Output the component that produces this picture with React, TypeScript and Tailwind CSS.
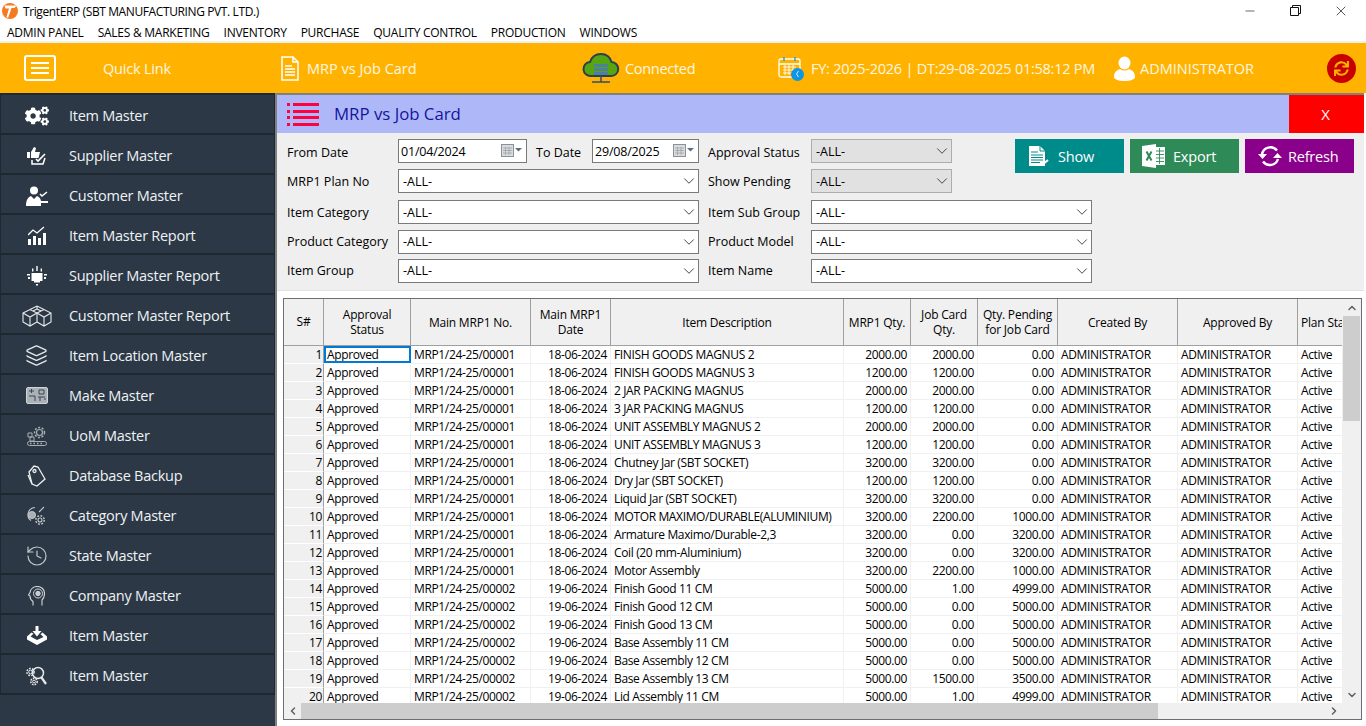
import { ChevronDown, ChevronLeft, ChevronRight, ChevronUp, History, Layers, Minus, X } from "lucide-react"
import { FaCogs, FaSync } from "react-icons/fa"
import type { ReactNode } from "react"

const FONT = "[font-family:'Open_Sans','Noto_Sans',sans-serif]"

const menus = ["ADMIN PANEL", "SALES & MARKETING", "INVENTORY", "PURCHASE", "QUALITY CONTROL", "PRODUCTION", "WINDOWS"]

function SupplierIcon() {
  return (
    <svg width="22" height="20" viewBox="0 0 22 20" fill="none">
      <path d="M1 6h3v6H1zM5 6l3-5 2 1-1 4h5l-1.5 6H5z" fill="#fff" />
      <path d="M6 14v4h11l2-6" stroke="#fff" strokeWidth="1.5" />
      <path d="M10 13l2 2 7-7" stroke="#fff" strokeWidth="1.6" />
    </svg>
  )
}

function CustomerIcon() {
  return (
    <svg width="24" height="20" viewBox="0 0 24 20" fill="none">
      <circle cx="9" cy="4.5" r="4" fill="#fff" />
      <path d="M1 20c0-6 2-9 5-10l3 3 3-3c2 .7 3.5 2 4 5h7v2h-7v3z" fill="#fff" />
      <path d="M15 8l2 2 5-4" stroke="#fff" strokeWidth="1.6" />
    </svg>
  )
}

function ChartIcon() {
  return (
    <svg width="18" height="20" viewBox="0 0 18 20" fill="#fff">
      <rect x="0" y="13" width="3" height="6" />
      <rect x="5" y="10" width="3" height="9" />
      <rect x="10" y="12" width="3" height="7" />
      <rect x="15" y="7" width="3" height="12" />
      <path d="M0 9l5-5 4 3 7-6" stroke="#fff" strokeWidth="1.3" fill="none" />
    </svg>
  )
}

function CrownIcon() {
  return (
    <svg width="20" height="20" viewBox="0 0 20 20" fill="#fff">
      <rect x="4.500" y="7" width="11" height="8" />
      <rect x="7" y="15" width="6" height="1.500" />
      <rect x="9" y="18" width="2" height="1.500" />
      <rect x="9.300" y="0" width="1.400" height="5" />
      <rect x="5" y="2.500" width="1.400" height="3" />
      <rect x="13.600" y="2.500" width="1.400" height="3" />
      <rect x="0" y="8" width="3" height="1.500" />
      <rect x="1" y="11" width="2" height="2" />
      <rect x="17" y="8" width="3" height="1.500" />
      <rect x="17" y="11" width="2" height="2" />
    </svg>
  )
}

function CubesIcon() {
  return (
    <svg width="30" height="22" viewBox="0 0 30 22" fill="none" stroke="#e8ebed" strokeWidth="1.100">
      <path d="M1 8l7-3.500L15 8v9l-7 4-7-4zM1 8l7 4 7-4M8 12v9" />
      <path d="M15 8l7-3.500L29 8v9l-7 4-7-4M15 8l7 4 7-4M22 12v9" />
      <path d="M8 4.500L15 1l7 3.500M15 1v3l-4 2M15 4l4 2" />
    </svg>
  )
}

function MakeIcon() {
  return (
    <svg width="22" height="17" viewBox="0 0 22 17">
      <rect x="0.500" y="0.500" width="21" height="16" rx="1.500" fill="#aab1b7" stroke="#cfd3d6" />
      <path d="M3 4h5M5.500 2v4M3 9h6v5M13 3h5v4h-5zM12 10h7M14 10v4M18 12h2" stroke="#3a4653" strokeWidth="1" fill="none" />
    </svg>
  )
}

function UomIcon() {
  return (
    <svg width="20" height="20" viewBox="0 0 20 20" fill="none" stroke="#a8afb5">
      <circle cx="12.500" cy="6.500" r="3" strokeWidth="1.200" />
      <circle cx="12.500" cy="6.500" r="5" strokeWidth="1.500" strokeDasharray="2 1.600" />
      <path d="M1 7h4v4H1zM3 11h4v4H3z" strokeWidth="1" />
      <rect x="0.500" y="15.500" width="19" height="4" rx="2" strokeWidth="1" />
      <path d="M3 17.500h14" strokeWidth="1.500" strokeDasharray="1.500 2" />
    </svg>
  )
}

function TagIcon() {
  return (
    <svg width="19" height="22" viewBox="0 0 19 22" fill="none" stroke="#eef0f2" strokeWidth="1.300">
      <path d="M2 7l5-6 4 1 7 12-8 7-5-2z" />
      <circle cx="7.500" cy="6" r="1.500" />
      <path d="M1 10l4 9" />
    </svg>
  )
}

function CategoryIcon() {
  return (
    <svg width="19" height="20" viewBox="0 0 19 20" fill="none" stroke="#c2c7cc">
      <path d="M8 1.500A7 7 0 0 0 1 8a7 7 0 0 0 3 6.500" strokeWidth="1.200" />
      <circle cx="5" cy="9" r="3.500" fill="#a8afb5" />
      <circle cx="13" cy="14" r="2" strokeWidth="1.100" />
      <circle cx="13" cy="14" r="4.200" strokeWidth="1.500" strokeDasharray="1.800 1.500" />
      <path d="M12 6l5-5" strokeWidth="1.100" />
    </svg>
  )
}

function HeadIcon() {
  return (
    <svg width="17" height="20" viewBox="0 0 17 20" fill="none" stroke="#d3d7da">
      <path d="M5 19.500v-4C2.500 14 2 12 2 10L.5 9 2 6.500C2.500 3 5.500.5 9.500.5c4 0 7 3 7 7 0 3-1 5-2.500 6.500v5.500" strokeWidth="1.100" />
      <circle cx="10" cy="7.500" r="4.500" strokeWidth="1" />
      <circle cx="10" cy="7.500" r="2.200" fill="#c7ccd0" />
    </svg>
  )
}

function TrayIcon() {
  return (
    <svg width="20" height="19" viewBox="0 0 20 19" fill="#fff">
      <path d="M8.500 0h3v5h3L10 10.500 5.500 5h3z" />
      <path d="M4.500 6.500l-4.500 4v3L10 19l10-5.500v-3l-4.500-4-2 1.800 3 2.700L10 14l-6.500-3.500 3-2.700z" />
    </svg>
  )
}

function GearSearchIcon() {
  return (
    <svg width="21" height="20" viewBox="0 0 21 20" fill="none" stroke="#e6e9eb">
      <circle cx="4.500" cy="6" r="1.800" strokeWidth="1" />
      <circle cx="4.500" cy="6" r="3.600" strokeWidth="1.500" strokeDasharray="1.800 1.200" />
      <circle cx="8" cy="15.500" r="1.400" strokeWidth="1" />
      <circle cx="8" cy="15.500" r="3.200" strokeWidth="1.500" strokeDasharray="1.600 1.100" />
      <circle cx="12" cy="7" r="5.500" strokeWidth="1.500" />
      <path d="M15.500 11.500l4.500 6.500" strokeWidth="2.200" />
    </svg>
  )
}

const sideItems: { label: string; icon: ReactNode }[] = [
  { label: "Item Master", icon: <FaCogs size={24} color="#fff" /> },
  { label: "Supplier Master", icon: <SupplierIcon /> },
  { label: "Customer Master", icon: <CustomerIcon /> },
  { label: "Item Master Report", icon: <ChartIcon /> },
  { label: "Supplier Master Report", icon: <CrownIcon /> },
  { label: "Customer Master Report", icon: <CubesIcon /> },
  { label: "Item Location Master", icon: <Layers size={23} color="#e8ebed" strokeWidth={1.3} /> },
  { label: "Make Master", icon: <MakeIcon /> },
  { label: "UoM Master", icon: <UomIcon /> },
  { label: "Database Backup", icon: <TagIcon /> },
  { label: "Category Master", icon: <CategoryIcon /> },
  { label: "State Master", icon: <History size={24} color="#c2c7cc" strokeWidth={1.2} /> },
  { label: "Company Master", icon: <HeadIcon /> },
  { label: "Item Master", icon: <TrayIcon /> },
  { label: "Item Master", icon: <GearSearchIcon /> },
]

const columns = [
  { title: "Approval Status", width: "w-[87px]", right: false },
  { title: "Main MRP1 No.", width: "w-[120px]", right: false },
  { title: "Main MRP1 Date", width: "w-[80px]", right: true },
  { title: "Item Description", width: "w-[233px]", right: false },
  { title: "MRP1 Qty.", width: "w-[67px]", right: true },
  { title: "Job Card Qty.", width: "w-[67px]", right: true },
  { title: "Qty. Pending for Job Card", width: "w-[80px]", right: true },
  { title: "Created By", width: "w-[120px]", right: false },
  { title: "Approved By", width: "w-[120px]", right: false },
  { title: "Plan Status", width: "w-[60px]", right: false },
]

const A = ["MRP1/24-25/00001", "18-06-2024"]
const B = ["MRP1/24-25/00002", "19-06-2024"]

const data: [string[], string, string, string, string][] = [
  [A, "FINISH GOODS MAGNUS 2", "2000.00", "2000.00", "0.00"],
  [A, "FINISH GOODS MAGNUS 3", "1200.00", "1200.00", "0.00"],
  [A, "2 JAR PACKING MAGNUS", "2000.00", "2000.00", "0.00"],
  [A, "3 JAR PACKING MAGNUS", "1200.00", "1200.00", "0.00"],
  [A, "UNIT ASSEMBLY MAGNUS 2", "2000.00", "2000.00", "0.00"],
  [A, "UNIT ASSEMBLY MAGNUS 3", "1200.00", "1200.00", "0.00"],
  [A, "Chutney Jar (SBT SOCKET)", "3200.00", "3200.00", "0.00"],
  [A, "Dry Jar (SBT SOCKET)", "1200.00", "1200.00", "0.00"],
  [A, "Liquid Jar (SBT SOCKET)", "3200.00", "3200.00", "0.00"],
  [A, "MOTOR MAXIMO/DURABLE(ALUMINIUM)", "3200.00", "2200.00", "1000.00"],
  [A, "Armature Maximo/Durable-2,3", "3200.00", "0.00", "3200.00"],
  [A, "Coil (20 mm-Aluminium)", "3200.00", "0.00", "3200.00"],
  [A, "Motor Assembly", "3200.00", "2200.00", "1000.00"],
  [B, "Finish Good 11 CM", "5000.00", "1.00", "4999.00"],
  [B, "Finish Good 12 CM", "5000.00", "0.00", "5000.00"],
  [B, "Finish Good 13 CM", "5000.00", "0.00", "5000.00"],
  [B, "Base Assembly 11 CM", "5000.00", "0.00", "5000.00"],
  [B, "Base Assembly 12 CM", "5000.00", "0.00", "5000.00"],
  [B, "Base Assembly 13 CM", "5000.00", "1500.00", "3500.00"],
  [B, "Lid Assembly 11 CM", "5000.00", "1.00", "4999.00"],
]

function CalendarPicker() {
  return (
    <svg width="22" height="14" viewBox="0 0 22 14" className="shrink-0">
      <rect x="0.500" y="0.500" width="12" height="12" fill="#d9dcdf" stroke="#8d9094" />
      <path d="M2 4h9M2 6.500h9M2 9h9M4.500 3v8M8 3v8" stroke="#9ea2a6" strokeWidth="0.800" />
      <path d="M14 4h7l-3.500 3.500z" fill="#5a6f88" />
    </svg>
  )
}

function DateBox({ value, width, gap }: { value: string; width: string; gap: string }) {
  return (
    <div className={`flex h-[24px] items-center border border-[#7a7a7a] bg-white pl-[2px] text-[12.500px] tracking-[-0.2px] ${width}`}>
      <span className={`pt-[2px] ${gap}`}>{value}</span>
      <CalendarPicker />
    </div>
  )
}

function Combo({ width, disabled, low }: { width: string; disabled?: boolean; low?: boolean }) {
  return (
    <div
      className={`flex h-[24px] items-center justify-between border pl-[4px] text-[12.500px] ${width} ${
        disabled ? "border-[#adadad] bg-[#e1e1e1]" : "border-[#7a7a7a] bg-white"
      }`}
    >
      <span className={low ? "pt-[2px]" : ""}>-ALL-</span>
      <ChevronDown size={18} color="#444" strokeWidth={1.3} />
    </div>
  )
}

function Label({ text, width }: { text: string; width: string }) {
  return <div className={`h-[24px] text-[12.500px] leading-[24px] whitespace-nowrap ${width}`}>{text}</div>
}

function ActionButton({ color, icon, label }: { color: string; icon: ReactNode; label: string }) {
  return (
    <button className={`flex h-[34px] w-[109px] items-center text-[14.500px] tracking-[-0.2px] text-white ${color}`}>
      {icon}
      <span className="pt-[2px]">{label}</span>
    </button>
  )
}

function FilterPanel() {
  return (
    <div className="h-[158px] shrink-0 border-b border-[#e2e2e2] bg-[#efefef] pl-[10px] pt-[6px]">
      <div className="flex items-start">
        <div className="w-[665px]">
          <div className="flex">
            <Label text="From Date" width="w-[111px] pt-[2px]" />
            <DateBox value="01/04/2024" width="w-[129px]" gap="w-[100px]" />
            <Label text="To Date" width="ml-[9px] w-[56px] pt-[2px]" />
            <DateBox value="29/08/2025" width="w-[107px]" gap="w-[78px]" />
            <Label text="Approval Status" width="ml-[9px] w-[103px] pt-[2px]" />
            <Combo width="w-[141px]" disabled low />
          </div>
          <div className="mt-[6px] flex">
            <Label text="MRP1 Plan No" width="w-[111px] pt-px" />
            <Combo width="w-[301px]" low />
            <Label text="Show Pending" width="ml-[9px] w-[103px] pt-px" />
            <Combo width="w-[141px]" disabled low />
          </div>
        </div>
        <div className="ml-[63px] flex gap-[6px]">
          <ActionButton
            color="bg-[#008b8b]"
            label="Show"
            icon={
              <svg width="22" height="22" viewBox="0 0 22 22" fill="none" className="ml-[13px] mr-[8px]">
                <path d="M1 1h11l5 5v15H1z" fill="#fff" />
                <path d="M12 1v5h5" stroke="#008b8b" />
                <path d="M3 7h7M3 10h12M3 12.500h12M3 15h12M3 17.500h9" stroke="#008b8b" />
                <path d="M14 20l6-5" stroke="#fff" strokeWidth="2" />
              </svg>
            }
          />
          <ActionButton
            color="bg-[#2e8b57]"
            label="Export"
            icon={
              <svg width="24" height="24" viewBox="0 0 24 24" className="ml-[12px] mr-[7px]">
                <path d="M12 3h11v18H12z" fill="#fff" />
                <path d="M14 7h8M14 10.500h8M14 14h8M14 17.500h8M17.500 4v16" stroke="#2e8b57" strokeWidth="0.900" />
                <path d="M0 2l14-2v24L0 22z" fill="#fff" />
                <path d="M4.500 7.500l5 9M9.500 7.500l-5 9" stroke="#2e8b57" strokeWidth="2" />
              </svg>
            }
          />
          <ActionButton
            color="bg-[#8b008b]"
            label="Refresh"
            icon={
              <svg width="24" height="22" viewBox="0 0 24 22" fill="none" className="ml-[13px] mr-[6px]">
                <path d="M4 9.500A8.500 8.500 0 0 1 19 5.500" stroke="#fff" strokeWidth="2.400" />
                <path d="M20 14a8.500 8.500 0 0 1-15 2.500" stroke="#fff" strokeWidth="2.400" />
                <path d="M0 9l4.500 5L9 9zM15 13l4.500-5 4.500 5z" fill="#fff" />
              </svg>
            }
          />
        </div>
      </div>
      <div className="mt-[7px] flex">
        <Label text="Item Category" width="w-[111px] pt-px" />
        <Combo width="w-[301px]" low />
        <Label text="Item Sub Group" width="ml-[9px] w-[103px] pt-px" />
        <Combo width="w-[281px]" low />
      </div>
      <div className="mt-[6px] flex">
        <Label text="Product Category" width="w-[111px]" />
        <Combo width="w-[301px]" />
        <Label text="Product Model" width="ml-[9px] w-[103px]" />
        <Combo width="w-[281px]" />
      </div>
      <div className="mt-[5px] flex">
        <Label text="Item Group" width="w-[111px]" />
        <Combo width="w-[301px]" />
        <Label text="Item Name" width="ml-[9px] w-[103px]" />
        <Combo width="w-[281px]" />
      </div>
    </div>
  )
}

function JobGrid() {
  return (
    <div className="ml-[6px] mt-[7px] flex h-[422px] w-[1079px] flex-col border border-[#6e6e6e] bg-white text-[12px]">
      <div className="flex min-h-0 flex-1">
        <div className="min-w-0 flex-1 overflow-hidden">
          <div className="flex h-[47px] border-b border-[#a0a0a0] bg-[#f0f0f0] tracking-[-0.2px]">
            <div className="flex w-[40px] shrink-0 items-center justify-center border-r border-[#a0a0a0]">S#</div>
            {columns.map((col) => (
              <div
                key={col.title}
                className={`flex shrink-0 items-center border-r border-[#a0a0a0] px-[3px] text-center leading-[15px] ${col.width} ${
                  col.title === "Plan Status" ? "justify-start whitespace-nowrap" : "justify-center"
                }`}
              >
                {col.title}
              </div>
            ))}
          </div>
          {data.map((row, i) => {
            const cells = ["Approved", row[0][0], row[0][1], row[1], row[2], row[3], row[4], "ADMINISTRATOR", "ADMINISTRATOR", "Active"]
            return (
              <div key={i} className="flex h-[18px] leading-[18px] tracking-[-0.36px]">
                <div className="w-[40px] shrink-0 border-r border-b border-r-[#a0a0a0] border-b-white bg-[#f0f0f0] pr-[1px] text-right">
                  {i + 1}
                </div>
                {columns.map((col, c) => (
                  <div
                    key={col.title}
                    className={`shrink-0 overflow-hidden whitespace-nowrap ${col.width} ${col.right ? "text-right" : ""} ${
                      i === 0 && c === 0
                        ? "mb-px border-2 border-[#0078d7] px-[1px] leading-[14px]"
                        : "border-r border-b border-[#f0f0f0] px-[3px]"
                    }`}
                  >
                    {cells[c]}
                  </div>
                ))}
              </div>
            )
          })}
        </div>
        <div className="flex w-[19px] shrink-0 flex-col items-center bg-[#f0f0f0]">
          <div className="flex h-[17px] items-center">
            <ChevronUp size={12} color="#606060" strokeWidth={3} />
          </div>
          <div className="h-[105px] w-[17px] bg-[#cdcdcd]" />
          <div className="flex-1" />
          <div className="flex h-[17px] items-center">
            <ChevronDown size={12} color="#606060" strokeWidth={3} />
          </div>
        </div>
      </div>
      <div className="flex h-[16px] shrink-0 items-center bg-[#f0f0f0] pr-[19px]">
        <div className="flex w-[17px] justify-center">
          <ChevronLeft size={12} color="#606060" strokeWidth={3} />
        </div>
        <div className="h-full w-[857px] bg-[#cdcdcd]" />
        <div className="flex-1" />
        <div className="flex w-[17px] justify-center">
          <ChevronRight size={12} color="#606060" strokeWidth={3} />
        </div>
      </div>
    </div>
  )
}

export default function App() {
  return (
    <div className={`flex h-[726px] w-[1366px] flex-col overflow-hidden bg-white text-black ${FONT}`}>
      <div className="flex h-[21px] shrink-0 items-center">
        <svg width="16" height="16" viewBox="0 0 16 16" className="ml-[2px] mr-[5px]">
          <circle cx="8" cy="8" r="8" fill="#f47b20" />
          <path d="M2.500 2.500h12l-2 2.500H9.500L6 15 4.500 14 7 5.500H3.500z" fill="#fff" />
        </svg>
        <span className="pt-[3px] text-[12px] tracking-[-0.39px]">TrigentERP (SBT MANUFACTURING PVT. LTD.)</span>
        <div className="ml-auto flex items-center">
          <Minus size={14} strokeWidth={1} className="mr-[33px]" />
          <svg width="11" height="11" viewBox="0 0 11 11" fill="none" stroke="#111" className="mr-[32px]">
            <path d="M0.500 2.500h8v8h-8zM2.500 2.500v-2h8v8h-2" />
          </svg>
          <X size={16} strokeWidth={1} className="mr-[17px]" />
        </div>
      </div>
      <div className="flex h-[20px] shrink-0 items-center gap-[14px] pl-[7px] pt-[3px] text-[12px] tracking-[-0.25px]">
        {menus.map((m) => (
          <span key={m}>{m}</span>
        ))}
      </div>
      <div className="h-[2px] shrink-0 bg-[#f0f0f0]" />
      <div className="flex h-[50px] shrink-0 items-center bg-[#ffb300] text-[14.500px] text-[#fdf6e3]">
        <div className="ml-[24px] flex h-[26px] w-[32px] flex-col items-center justify-center gap-[3px] rounded-[3px] border-2 border-white">
          <span className="h-[2px] w-[18px] bg-white" />
          <span className="h-[2px] w-[18px] bg-white" />
          <span className="h-[2px] w-[18px] bg-white" />
        </div>
        <span className="ml-[47px] w-[178px] pt-[2px] tracking-[-0.2px]">Quick Link</span>
        <svg width="18" height="25" viewBox="0 0 18 25" fill="none" stroke="#fff" strokeWidth="1.500">
          <path d="M1 1h11l5 5v18H1zM12 1v5h5" />
          <path d="M4 10h7M4 13h10M4 16h10M4 19h10" />
        </svg>
        <span className="ml-[8px] w-[275px] pt-[2px]">MRP vs Job Card</span>
        <svg width="38" height="30" viewBox="0 0 38 30" className="shrink-0">
          <path d="M9 23a7 7 0 0 1-1-14C10 3 15 1 19 1c5 0 9 3 10.500 8a7 7 0 0 1-.500 14z" fill="#56a612" stroke="#2f3f4f" strokeWidth="2" />
          <rect x="12" y="11" width="14" height="3" fill="#4d7f9e" />
          <rect x="12" y="15" width="14" height="3" fill="#4d7f9e" />
          <rect x="12" y="19" width="14" height="3" fill="#4d7f9e" />
          <path d="M19 23v6M10 29h18" stroke="#2f4f6f" strokeWidth="1.500" />
        </svg>
        <span className="ml-[5px] w-[153px] pt-[2px] tracking-[-0.3px]">Connected</span>
        <svg width="26" height="25" viewBox="0 0 26 25" fill="none" stroke="#fff" className="shrink-0">
          <rect x="1" y="3" width="21" height="18" rx="2" strokeWidth="1.300" />
          <path d="M1 8h21" strokeWidth="1.500" />
          <path d="M5 11h13M5 14h13M5 17h9M7 9v10M11 9v10M15 9v10" strokeWidth="1" strokeOpacity="0.900" />
          <path d="M6 1v4M17 1v4" stroke="#3aa0b8" strokeWidth="1.500" />
          <circle cx="19.500" cy="18.500" r="6.500" fill="#0d95e8" stroke="none" />
          <path d="M20.500 15l-2 3 2 3" stroke="#fff" strokeWidth="0.800" />
        </svg>
        <span className="ml-[7px] w-[303px] whitespace-nowrap pt-px tracking-[-0.25px]">FY: 2025-2026 | DT:29-08-2025 01:58:12 PM</span>
        <svg width="21" height="25" viewBox="0 0 21 25" fill="#fff" className="shrink-0">
          <ellipse cx="10.500" cy="7" rx="6" ry="6.500" />
          <path d="M0 21c0-5 3-7 6-8 3 2 6 2 9 0 3 1 6 3 6 8 0 2.500-5 4-10.500 4S0 23.500 0 21z" />
        </svg>
        <span className="ml-[5px] w-[187px] pt-[2px]">ADMINISTRATOR</span>
        <div className="flex h-[29px] w-[29px] items-center justify-center rounded-full bg-[#c80000]">
          <FaSync size={15} color="#ffb300" />
        </div>
      </div>
      <div className="flex min-h-0 flex-1">
        <div className="flex w-[275px] shrink-0 flex-col border-t-2 border-[#1e2830] bg-[#2c3845]">
          {sideItems.map((item, i) => (
            <div key={i} className="flex h-10 shrink-0 items-center border-x border-b-2 border-[#1e2830] pt-[3px] text-[14.500px] tracking-[-0.27px] text-[#eef2f5]">
              <div className="flex w-[68px] justify-center pl-[3px]">{item.icon}</div>
              <span>{item.label}</span>
            </div>
          ))}
        </div>
        <div className="flex w-[1089px] shrink-0 flex-col border-l-2 border-t-2 border-[#808080] bg-white">
          <div className="flex h-[38px] shrink-0 items-center bg-[#aeb8f8]">
            <svg width="32" height="23" viewBox="0 0 32 23" fill="#ff0040" className="ml-[10px] shrink-0">
              <rect x="0" y="0" width="3" height="3" />
              <rect x="6" y="0" width="26" height="3" />
              <rect x="0" y="7" width="3" height="3" />
              <rect x="6" y="7" width="26" height="3" />
              <rect x="0" y="13" width="3" height="3" />
              <rect x="6" y="13" width="26" height="3" />
              <rect x="0" y="20" width="3" height="3" />
              <rect x="6" y="20" width="26" height="3" />
            </svg>
            <span className="ml-[15px] text-[16.800px] text-[#14149c]">MRP vs Job Card</span>
            <div className="ml-auto flex h-full w-[75px] items-center justify-center bg-[#ff0000] pr-[2px] text-[15px] text-white">X</div>
          </div>
          <FilterPanel />
          <JobGrid />
        </div>
      </div>
    </div>
  )
}
